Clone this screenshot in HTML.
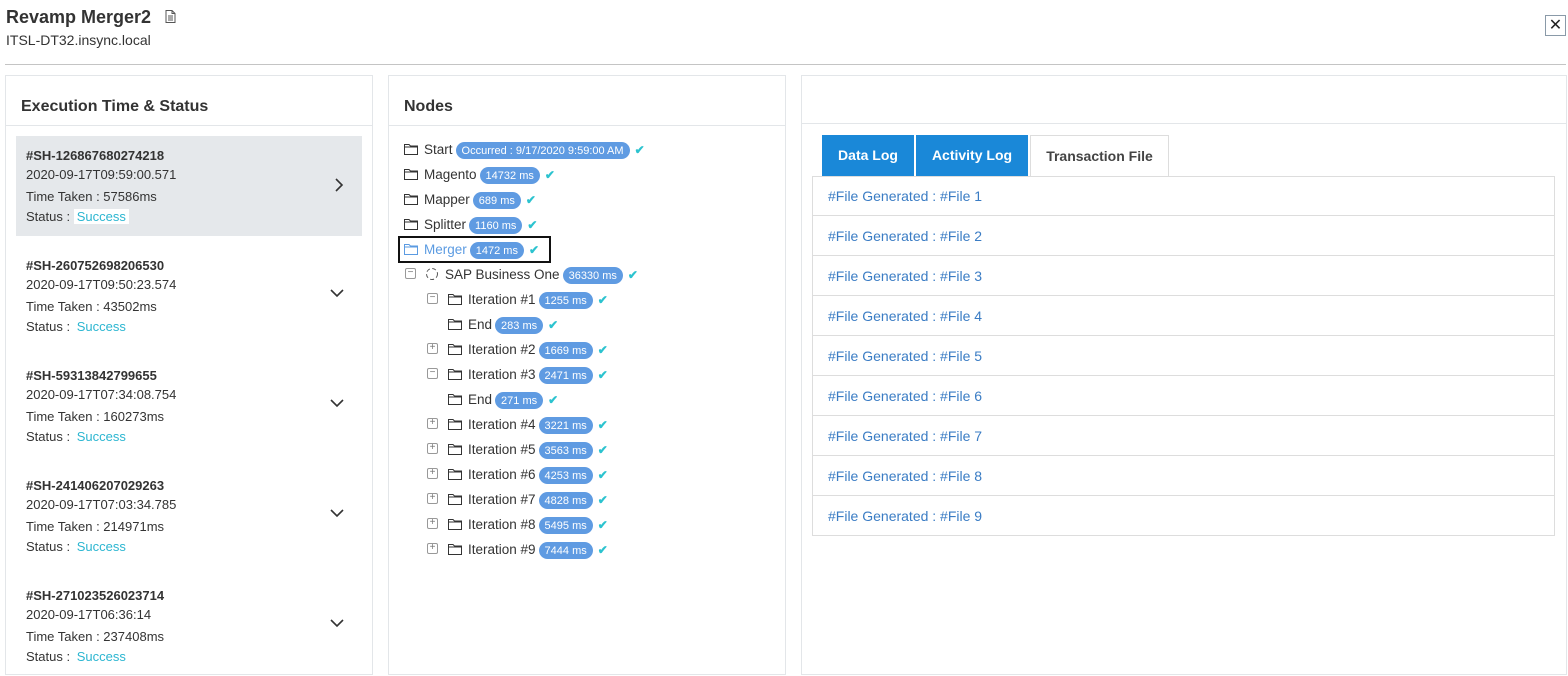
<!DOCTYPE html>
<html><head><meta charset="utf-8"><style>
*{box-sizing:border-box;margin:0;padding:0}
body{width:1568px;height:668px;overflow:hidden;background:#fff;font-family:"Liberation Sans",sans-serif;color:#333;position:relative}
.abs{position:absolute}
.panel{position:absolute;top:75px;height:600px;border:1px solid #e3e6e9;background:#fff}
.ph{height:51px;border-bottom:1px solid #e3e6e9;font-weight:bold;font-size:16px;padding:22px 0 0 15px;color:#333}
.item{position:absolute;left:10px;width:346px;height:100px;font-size:13px;padding:12px 0 0 10px}
.item b{font-size:13px;display:block;height:17px}
.item div{height:20px;line-height:20px}
.item div.t{height:22px;line-height:24px}
.ok{color:#2cb6d1}
.chev{position:absolute;right:18px;top:42px}
.row{position:absolute;height:20px;font-size:13.5px;line-height:22px;white-space:nowrap;color:#333}
.bd{display:inline-block;background:#5f9be2;color:#fff;font-size:11px;border-radius:9px;padding:0 6px;height:17px;line-height:18px;vertical-align:middle;margin-left:3px}
.ck{color:#2cc3cf;font-weight:bold;margin-left:5px;font-size:12px}
.fold{display:inline-block;vertical-align:middle;margin-right:6px;margin-top:-3px}
.tg{position:absolute;width:11px;height:11px;border:1px solid #999;border-radius:2px;font-size:10px;line-height:8px;text-align:center;color:#777}
.tab{position:absolute;top:135px;height:41px;font-size:14px;font-weight:bold;text-align:center;line-height:41px}
.li{position:absolute;left:812px;width:743px;height:40px;border:1px solid #ddd;border-top:none;font-size:14px;color:#3a7cc4;padding:12px 0 0 15px}
</style></head><body>
<div class="abs" style="left:6px;top:7px;font-size:18px;font-weight:bold;color:#333">Revamp Merger2</div>
<svg class="abs" style="left:165px;top:10px" width="11" height="13" viewBox="0 0 11 13"><path d="M1 .5h6l3 3v9H1z M7 .5v3h3 M3 6h5M3 8h5M3 10h5" fill="none" stroke="#555" stroke-width="1"/></svg>
<div class="abs" style="left:6px;top:32px;font-size:14px;color:#333">ITSL-DT32.insync.local</div>
<div class="abs" style="left:1545px;top:15px;width:21px;height:21px;border:1px solid #8a9aa8;font-size:16px;text-align:center;line-height:19px;color:#222">✕</div>
<div class="abs" style="left:5px;top:64px;width:1561px;height:1px;background:#c4c4c4"></div>

<div class="panel" style="left:5px;width:368px">
<div class="ph" style="height:50px">Execution Time &amp; Status</div>
<div class="item" style="top:60px;background:#e5e8eb"><b>#SH-126867680274218</b><div>2020-09-17T09:59:00.571</div><div class="t">Time Taken : 57586ms</div><div>Status : <span class="ok" style="background:#fff;padding:0 3px">Success</span></div><svg class="chev" width="10" height="14"><path d="M2 1l6 6-6 6" fill="none" stroke="#333" stroke-width="1.6"/></svg></div>
<div class="item" style="top:170px"><b>#SH-260752698206530</b><div>2020-09-17T09:50:23.574</div><div class="t">Time Taken : 43502ms</div><div>Status : <span class="ok" style="padding:0 3px">Success</span></div><svg class="chev" width="14" height="10"><path d="M1 2l6 6 6-6" fill="none" stroke="#333" stroke-width="1.6"/></svg></div>
<div class="item" style="top:280px"><b>#SH-59313842799655</b><div>2020-09-17T07:34:08.754</div><div class="t">Time Taken : 160273ms</div><div>Status : <span class="ok" style="padding:0 3px">Success</span></div><svg class="chev" width="14" height="10"><path d="M1 2l6 6 6-6" fill="none" stroke="#333" stroke-width="1.6"/></svg></div>
<div class="item" style="top:390px"><b>#SH-241406207029263</b><div>2020-09-17T07:03:34.785</div><div class="t">Time Taken : 214971ms</div><div>Status : <span class="ok" style="padding:0 3px">Success</span></div><svg class="chev" width="14" height="10"><path d="M1 2l6 6 6-6" fill="none" stroke="#333" stroke-width="1.6"/></svg></div>
<div class="item" style="top:500px"><b>#SH-271023526023714</b><div>2020-09-17T06:36:14</div><div class="t">Time Taken : 237408ms</div><div>Status : <span class="ok" style="padding:0 3px">Success</span></div><svg class="chev" width="14" height="10"><path d="M1 2l6 6 6-6" fill="none" stroke="#333" stroke-width="1.6"/></svg></div>
</div>

<div class="panel" style="left:388px;width:398px"><div class="ph" style="height:50px">Nodes</div></div>

<div class="panel" style="left:801px;width:766px"><div class="ph" style="height:48px"></div></div>

<svg width="0" height="0" style="position:absolute"><defs><symbol id="f" viewBox="0 0 14 12"><path d="M.5 1.5h4.5l1.5 1.5h7v8.5H.5z M.5 4h13" fill="none" stroke="currentColor" stroke-width="1"/></symbol></defs></svg>

<div class="row" style="left:404px;top:139px"><svg class="fold" width="14" height="12"><use href="#f"/></svg>Start<span class="bd">Occurred : 9/17/2020 9:59:00 AM</span><span class="ck">✔</span></div>
<div class="row" style="left:404px;top:164px"><svg class="fold" width="14" height="12"><use href="#f"/></svg>Magento<span class="bd">14732 ms</span><span class="ck">✔</span></div>
<div class="row" style="left:404px;top:189px"><svg class="fold" width="14" height="12"><use href="#f"/></svg>Mapper<span class="bd">689 ms</span><span class="ck">✔</span></div>
<div class="row" style="left:404px;top:214px"><svg class="fold" width="14" height="12"><use href="#f"/></svg>Splitter<span class="bd">1160 ms</span><span class="ck">✔</span></div>
<div class="abs" style="left:398px;top:236px;width:153px;height:27px;border:2px solid #111"></div>
<div class="row" style="left:404px;top:239px;color:#5b9be2"><svg class="fold" width="14" height="12" style="color:#5b9be2"><use href="#f"/></svg>Merger<span class="bd">1472 ms</span><span class="ck">✔</span></div>
<div class="tg" style="left:405px;top:268px">−</div>
<div class="row" style="left:425px;top:264px"><svg class="fold" width="14" height="14" viewBox="0 0 14 14"><circle cx="7" cy="7" r="5.5" fill="none" stroke="#555" stroke-dasharray="4 2.5"/></svg>SAP Business One<span class="bd">36330 ms</span><span class="ck">✔</span></div>
<div class="tg" style="left:427px;top:293px">−</div>
<div class="row" style="left:448px;top:289px"><svg class="fold" width="14" height="12"><use href="#f"/></svg>Iteration #1<span class="bd">1255 ms</span><span class="ck">✔</span></div>
<div class="row" style="left:448px;top:314px"><svg class="fold" width="14" height="12"><use href="#f"/></svg>End<span class="bd">283 ms</span><span class="ck">✔</span></div>
<div class="tg" style="left:427px;top:343px">+</div>
<div class="row" style="left:448px;top:339px"><svg class="fold" width="14" height="12"><use href="#f"/></svg>Iteration #2<span class="bd">1669 ms</span><span class="ck">✔</span></div>
<div class="tg" style="left:427px;top:368px">−</div>
<div class="row" style="left:448px;top:364px"><svg class="fold" width="14" height="12"><use href="#f"/></svg>Iteration #3<span class="bd">2471 ms</span><span class="ck">✔</span></div>
<div class="row" style="left:448px;top:389px"><svg class="fold" width="14" height="12"><use href="#f"/></svg>End<span class="bd">271 ms</span><span class="ck">✔</span></div>
<div class="tg" style="left:427px;top:418px">+</div>
<div class="row" style="left:448px;top:414px"><svg class="fold" width="14" height="12"><use href="#f"/></svg>Iteration #4<span class="bd">3221 ms</span><span class="ck">✔</span></div>
<div class="tg" style="left:427px;top:443px">+</div>
<div class="row" style="left:448px;top:439px"><svg class="fold" width="14" height="12"><use href="#f"/></svg>Iteration #5<span class="bd">3563 ms</span><span class="ck">✔</span></div>
<div class="tg" style="left:427px;top:468px">+</div>
<div class="row" style="left:448px;top:464px"><svg class="fold" width="14" height="12"><use href="#f"/></svg>Iteration #6<span class="bd">4253 ms</span><span class="ck">✔</span></div>
<div class="tg" style="left:427px;top:493px">+</div>
<div class="row" style="left:448px;top:489px"><svg class="fold" width="14" height="12"><use href="#f"/></svg>Iteration #7<span class="bd">4828 ms</span><span class="ck">✔</span></div>
<div class="tg" style="left:427px;top:518px">+</div>
<div class="row" style="left:448px;top:514px"><svg class="fold" width="14" height="12"><use href="#f"/></svg>Iteration #8<span class="bd">5495 ms</span><span class="ck">✔</span></div>
<div class="tg" style="left:427px;top:543px">+</div>
<div class="row" style="left:448px;top:539px"><svg class="fold" width="14" height="12"><use href="#f"/></svg>Iteration #9<span class="bd">7444 ms</span><span class="ck">✔</span></div>

<div class="tab" style="left:822px;width:92px;background:#1a88d8;color:#fff">Data Log</div>
<div class="tab" style="left:916px;width:112px;background:#1a88d8;color:#fff">Activity Log</div>
<div class="tab" style="left:1030px;width:139px;background:#fff;color:#444;border:1px solid #ddd;border-bottom:none">Transaction File</div>
<div class="abs" style="left:812px;top:176px;width:743px;height:1px;background:#ddd"></div>
<div class="li" style="top:177px;height:39px;padding-top:11px">#File Generated : #File 1</div>
<div class="li" style="top:216px">#File Generated : #File 2</div>
<div class="li" style="top:256px">#File Generated : #File 3</div>
<div class="li" style="top:296px">#File Generated : #File 4</div>
<div class="li" style="top:336px">#File Generated : #File 5</div>
<div class="li" style="top:376px">#File Generated : #File 6</div>
<div class="li" style="top:416px">#File Generated : #File 7</div>
<div class="li" style="top:456px">#File Generated : #File 8</div>
<div class="li" style="top:496px">#File Generated : #File 9</div>
</body></html>
